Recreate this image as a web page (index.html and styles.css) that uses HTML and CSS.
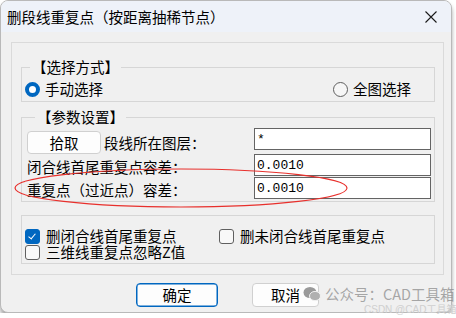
FILE: index.html
```html
<!DOCTYPE html>
<html lang="zh-cn">
<head>
    <meta charset="UTF-8">
    <title>删段线重复点</title>
    <link rel="stylesheet" href="styles.css">
</head>
<body>
    <div class="window">
        <div class="titlebar">
            <span class="title">删段线重复点（按距离抽稀节点）</span>
            <svg class="close" width="12" height="12" viewBox="0 0 12 12">
                <path d="M0.5 0.5L11.5 11.5M11.5 0.5L0.5 11.5" stroke="#1a1a1a" stroke-width="1.1"/>
            </svg>
        </div>
        <div class="client">
            <div class="frame">
                <fieldset class="group choose">
                    <legend>【选择方式】</legend>
                    <div class="radio-row">
                        <label class="radio checked"><span class="dot"></span>手动选择</label>
                        <label class="radio"><span class="dot"></span>全图选择</label>
                    </div>
                </fieldset>

                <fieldset class="group params">
                    <legend>【参数设置】</legend>
                    <div class="prow first">
                        <div class="pick">
                            <button type="button" class="btn pick-btn">拾取</button>
                            <span>段线所在图层：</span>
                        </div>
                        <input type="text" class="field" value="*">
                    </div>
                    <div class="prow">
                        <span class="plabel">闭合线首尾重复点容差：</span>
                        <input type="text" class="field" value="0.0010">
                    </div>
                    <div class="prow">
                        <span class="plabel">重复点（过近点）容差：</span>
                        <input type="text" class="field" value="0.0010">
                    </div>
                </fieldset>

                <div class="group checks">
                    <div class="check-row">
                        <label class="check checked"><span class="box"></span>删闭合线首尾重复点</label>
                        <label class="check"><span class="box"></span>删未闭合线首尾重复点</label>
                    </div>
                    <div class="check-row">
                        <label class="check"><span class="box"></span>三维线重复点忽略Z值</label>
                    </div>
                </div>
            </div>

            <div class="buttons">
                <button type="button" class="btn ok">确定</button>
                <button type="button" class="btn cancel">取消</button>
            </div>
        </div>
    </div>

    <svg class="mark" width="456" height="318" viewBox="0 0 456 318">
        <ellipse cx="181" cy="188" rx="166" ry="19" fill="none" stroke="#e8302c" stroke-width="1.2"/>
    </svg>

    <div class="watermark">
        <svg class="wechat" width="18" height="16" viewBox="0 0 18 16">
            <ellipse cx="7" cy="6.5" rx="6.5" ry="5.5" fill="#9a9a9a"/>
            <ellipse cx="12" cy="10" rx="5.5" ry="4.6" fill="#b0b0b0" stroke="#f0f0f0" stroke-width="1"/>
        </svg>
        <span>公众号：CAD工具箱</span>
    </div>
    <div class="csdn">CSDN @CAD工具箱</div>
</body>
</html>
```

FILE: styles.css
```css
body {
    margin: 0;
    background-color: #fff;
    font-family: "Noto Sans CJK SC", "Noto Sans", sans-serif;
    font-size: 14.5px;
    color: #000;
}

.window {
    width: 452px;
    height: 313px;
    box-sizing: border-box;
    border: 1px solid #b9b9b9;
    border-radius: 8px;
    background-color: #f0f0f0;
    overflow: hidden;
    box-shadow: 0 4px 4px rgba(0, 0, 0, 0.35);
}

.titlebar {
    height: 31px;
    background-color: #eef2f9;
    display: flex;
    align-items: center;
    justify-content: space-between;
    padding: 0 14px 0 6px;
}

.title {
    line-height: 20px;
}

.close {
    display: block;
}

.client {
    padding: 10px 0 0 10px;
}

.frame {
    width: 433px;
    box-sizing: border-box;
    border: 1px solid #dadada;
    padding: 14px 7px 10px 9px;
}

.group {
    width: 414px;
    box-sizing: border-box;
    margin: 0;
    border: 1px solid #d6d6d6;
}

fieldset.group {
    padding: 0;
}

legend {
    margin-left: 8px;
    padding: 0 2px;
    line-height: 20px;
}

/* 选择方式 */
.radio-row {
    display: flex;
    justify-content: space-between;
    margin: 2px 0 2px;
    padding: 0 23px 0 3px;
    height: 20px;
}

.radio {
    display: flex;
    align-items: center;
    line-height: 20px;
}

.dot {
    width: 15px;
    height: 15px;
    box-sizing: border-box;
    border-radius: 50%;
    border: 1px solid #5f5f5f;
    background-color: #f6f6f6;
    margin-right: 5px;
}

.radio.checked .dot {
    border: 4.5px solid #0067c0;
    background-color: #fff;
}

/* 参数设置 */
.params {
    margin-top: 5px;
    padding: 1px 3px 1px 5px !important;
}

.prow {
    display: flex;
    justify-content: space-between;
    align-items: flex-start;
}

.pick {
    display: flex;
    align-items: center;
    margin-top: 3px;
}

.pick span {
    margin-left: 3px;
    line-height: 20px;
}

.plabel {
    line-height: 20px;
    padding-top: 3px;
}

.field {
    width: 177px;
    height: 22px;
    box-sizing: border-box;
    margin: 0;
    border: 1px solid #646464;
    padding: 0 2px;
    background-color: #fff;
    font-family: "Liberation Mono", monospace;
    font-size: 13px;
    color: #000;
}

.btn {
    box-sizing: border-box;
    height: 23px;
    padding: 0;
    border: 1px solid #d0d0d0;
    border-radius: 4px;
    background-color: #fdfdfd;
    font-family: "Noto Sans CJK SC", sans-serif;
    font-size: 14.5px;
    line-height: 20px;
    color: #000;
}

.pick-btn {
    width: 74px;
}

/* 勾选项 */
.checks {
    margin-top: 13px;
    padding: 12px 0 3px 3px;
}

.check-row {
    display: flex;
    height: 16px;
}

.check {
    display: flex;
    align-items: center;
    height: 16px;
    line-height: 16px;
}

.check-row .check:first-child {
    width: 194px;
}

.box {
    width: 15px;
    height: 15px;
    box-sizing: border-box;
    border: 1px solid #5f5f5f;
    border-radius: 3px;
    background-color: #f8f8f8;
    margin-right: 6px;
    position: relative;
}

.check.checked .box {
    border-color: #0067c0;
    background-color: #0067c0;
}

.check.checked .box::after {
    content: "";
    position: absolute;
    left: 4px;
    top: 2px;
    width: 3px;
    height: 6px;
    border: solid #fff;
    border-width: 0 1.2px 1.2px 0;
    transform: rotate(40deg);
}

/* 按钮 */
.buttons {
    display: flex;
    margin-top: 8px;
    padding-left: 125px;
}

.ok {
    width: 82px;
    height: 24px;
    border-color: #0067c0;
    box-shadow: inset 0 0 0 0.5px #0067c0;
}

.cancel {
    width: 67px;
    height: 24px;
    margin-left: 34px;
}

/* 覆盖标记 */
.mark {
    position: absolute;
    left: 0;
    top: 0;
    pointer-events: none;
}

.watermark {
    position: absolute;
    left: 303px;
    top: 285px;
    height: 18px;
    display: flex;
    align-items: center;
    white-space: nowrap;
    color: rgba(140, 140, 140, 0.75);
    font-size: 14.5px;
    line-height: 18px;
}

.wechat {
    margin-right: 4px;
}

.csdn {
    position: absolute;
    left: 364px;
    top: 304px;
    white-space: nowrap;
    font-family: "Liberation Sans", "Noto Sans CJK SC", sans-serif;
    font-size: 10px;
    line-height: 11px;
    color: #cfcfcf;
}
```
